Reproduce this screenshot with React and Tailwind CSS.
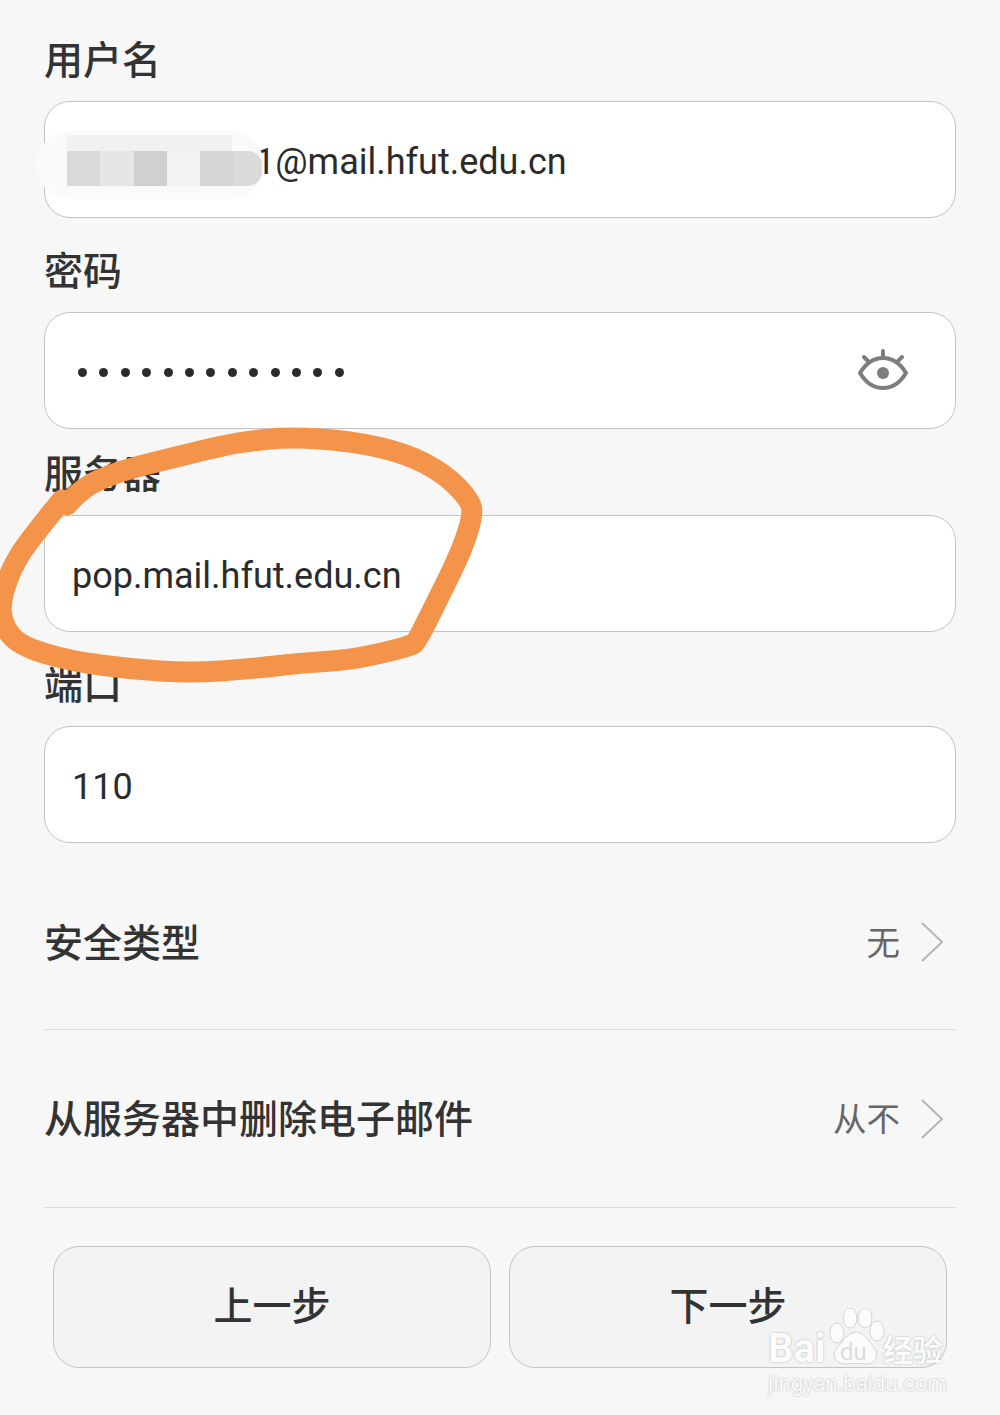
const font = { fontFamily: '"Roboto", "Noto Sans CJK SC", sans-serif' };

// freehand circle drawn on top of the screenshot, not closed so the pen end shows
const loop = [
  [67, 505], [82, 487], [120, 471], [160, 461], [200, 451], [240, 442], [290, 437], [350, 441],
  [405, 453], [445, 474], [470, 500], [473, 515], [462, 550], [440, 595], [417, 641], [412, 645],
  [395, 650], [350, 660], [300, 663], [250, 669], [190, 673], [130, 669], [70, 661], [20, 646], [3, 626],
  [0, 600], [15, 560], [40, 527], [62, 500],
];

const loopPath = () => {
  let d = `M${loop[0][0]} ${loop[0][1]}`;
  for (let i = 1; i < loop.length - 1; i++) {
    const mx = (loop[i][0] + loop[i + 1][0]) / 2;
    const my = (loop[i][1] + loop[i + 1][1]) / 2;
    d += ` Q${loop[i][0]} ${loop[i][1]} ${mx} ${my}`;
  }
  d += ` L${loop[loop.length - 1][0]} ${loop[loop.length - 1][1]}`;
  return d;
};

const Label = ({ children, className }) => (
  <div className={`h-[46px] text-[39px] font-medium leading-[46px] text-[#333333] ${className}`}>{children}</div>
);

const Field = ({ children }) => (
  <div className="mt-[17px] flex h-[117px] items-center justify-between rounded-[26px] border border-[#c4c4c4] bg-white pl-[27px] pr-[46px] text-[36px] text-[#2b2b2b]">
    {children}
  </div>
);

const Eye = () => (
  <svg width="52" height="46" viewBox="0 0 52 46" fill="none" stroke="#7d7d7d" strokeWidth="4" strokeLinecap="round" strokeLinejoin="round">
    <path d="M3 25 C9 15 16 10 26 10 C36 10 43 15 49 25 C43 35 36 40 26 40 C16 40 9 35 3 25Z" />
    <path d="M26 3V9M7 9l5 5M45 9l-5 5" />
    <circle cx="26" cy="25" r="6" fill="#7d7d7d" stroke="none" />
  </svg>
);

const Chevron = () => (
  <svg width="24" height="42" viewBox="0 0 24 42" fill="none" stroke="#b5b5b5" strokeWidth="2">
    <path d="M2 2L22 21L2 40" />
  </svg>
);

const Row = ({ title, value, className }) => (
  <div className={`flex items-center justify-between border-b border-[#dedede] ${className}`}>
    <span className="pt-[4px] text-[39px] font-medium text-[#333333]">{title}</span>
    <span className="flex items-center gap-[20px] pr-[12px] text-[33.5px] text-[#666666]">
      <span className="pt-[4px]">{value}</span>
      <Chevron />
    </span>
  </div>
);

const StepButton = ({ children }) => (
  <button className="flex h-[122px] w-[439px] items-center justify-center rounded-[26px] border border-[#c4c4c4] bg-[#f3f3f3] text-[39px] font-medium text-[#333333]">
    {children}
  </button>
);

const Redaction = () => (
  <div className="absolute left-[36px] top-[131px]">
    <div className="h-[68px] w-[228px] rounded-[34px] bg-[#fafafa]" />
    <div className="absolute left-[31px] top-[4px] h-[16px] w-[165px] bg-[#f1f1f1]" />
    <div className="absolute left-[31px] top-[20px] flex h-[35px]">
      <div className="w-[33px] bg-[#d9d9d9]" />
      <div className="w-[34px] bg-[#e6e6e6]" />
      <div className="w-[33px] bg-[#d0d0d0]" />
      <div className="w-[33px] bg-[#f3f3f3]" />
      <div className="w-[34px] bg-[#d6d6d6]" />
      <div className="w-[28px] rounded-r-[14px] bg-[#dadada]" />
    </div>
  </div>
);

const Watermark = () => (
  <div className="absolute left-[768px] top-[1328px] w-[182px]">
    <svg className="absolute left-[55px] top-[-20px]" width="66" height="60" viewBox="0 0 66 60" fill="#fbfbfb" stroke="#d4d4d4" strokeWidth="1">
      <ellipse cx="14" cy="25" rx="7" ry="10" />
      <ellipse cx="27" cy="10" rx="7" ry="10" />
      <ellipse cx="42" cy="10" rx="7" ry="10" />
      <ellipse cx="54" cy="23" rx="7" ry="10" />
      <path d="M33 24C42 24 48 36 53 43C56 51 50 57 42 56C36 55 30 55 24 56C16 57 9 51 12 43C18 36 24 24 33 24Z" />
    </svg>
    <div className="relative flex h-[42px] items-end font-bold text-[#fbfbfb] [text-shadow:0_0_2px_#a8a8a8]">
      <span className="w-[72px] text-[40px] leading-[42px]">Bai</span>
      <span className="w-[34px] pb-[2px] text-[24px] font-normal leading-[32px] text-[#dcdcdc] [text-shadow:none]">du</span>
      <span className="ml-[9px] text-[30px] leading-[38px]">经验</span>
    </div>
    <div className="relative mt-[2px] text-[22px] leading-[24px] text-[#fbfbfb] [text-shadow:0_0_2px_#a8a8a8]">jingyan.baidu.com</div>
  </div>
);

export default function App() {
  return (
    <div className="relative h-[1415px] w-[1000px] overflow-hidden bg-[#f7f7f7] px-[44px] pt-[38px]" style={font}>
      <Label>用户名</Label>
      <Field>
        <span className="pl-[183px] pt-[4px]">1@mail.hfut.edu.cn</span>
      </Field>

      <Label className="mt-[31px]">密码</Label>
      <Field>
        <div className="flex items-center gap-[12.4px] pl-[6px] pt-[4px]">
          {Array.from({ length: 13 }).map((_, i) => (
            <span key={i} className="h-[9px] w-[9px] rounded-full bg-[#2b2b2b]" />
          ))}
        </div>
        <Eye />
      </Field>

      <Label className="mt-[23px]">服务器</Label>
      <Field>
        <span className="pt-[4px]">pop.mail.hfut.edu.cn</span>
      </Field>

      <Label className="mt-[31px]">端口</Label>
      <Field>
        <span className="pt-[4px]">110</span>
      </Field>

      <Row title="安全类型" value="无" className="mt-[12px] h-[175px]" />
      <Row title="从服务器中删除电子邮件" value="从不" className="h-[178px]" />

      <div className="mt-[38px] flex gap-[18px] px-[9px]">
        <StepButton>上一步</StepButton>
        <StepButton>下一步</StepButton>
      </div>

      <Redaction />
      <svg className="absolute left-0 top-0" width="1000" height="1415" fill="none">
        <path d={loopPath()} stroke="#f4934a" strokeWidth="21" strokeLinecap="round" strokeLinejoin="round" />
      </svg>
      <Watermark />
    </div>
  );
}
